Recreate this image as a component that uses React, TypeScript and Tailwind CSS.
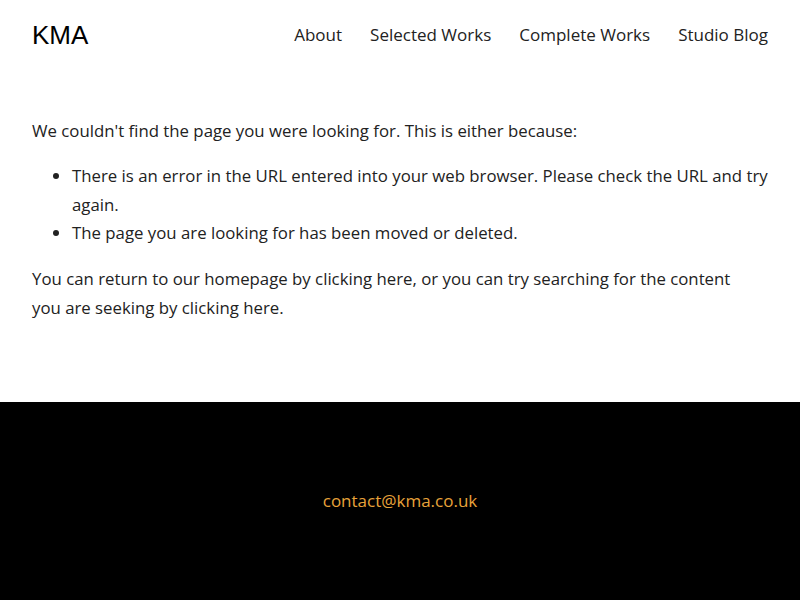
import React from "react";

export default function App() {
  const body = { fontFamily: '"Open Sans", "Liberation Sans", sans-serif' };
  return (
    <div className="min-h-screen bg-white flex flex-col" style={body}>
      <header className="flex items-center justify-between px-8 h-[70px]">
        <div className="text-[26px] text-black" style={{ fontFamily: '"Liberation Sans", Arial, sans-serif' }}>KMA</div>
        <nav className="flex gap-[28px] text-[17px] text-[#222]">
          <span>About</span>
          <span>Selected Works</span>
          <span>Complete Works</span>
          <span>Studio Blog</span>
        </nav>
      </header>
      <main className="px-8 pt-[47px] h-[332px] text-[16.8px] leading-[28.8px] text-[#222]">
        <p>We couldn't find the page you were looking for. This is either because:</p>
        <ul className="list-disc pl-10 mt-4">
          <li>There is an error in the URL entered into your web browser. Please check the URL and try again.</li>
          <li>The page you are looking for has been moved or deleted.</li>
        </ul>
        <p className="mt-[17px] max-w-[720px]">You can return to our homepage by clicking here, or you can try searching for the content you are seeking by clicking here.</p>
      </main>
      <footer className="bg-black h-[198px] flex items-center justify-center">
        <span className="text-[17px] text-[#e8a33a]">contact@kma.co.uk</span>
      </footer>
    </div>
  );
}
